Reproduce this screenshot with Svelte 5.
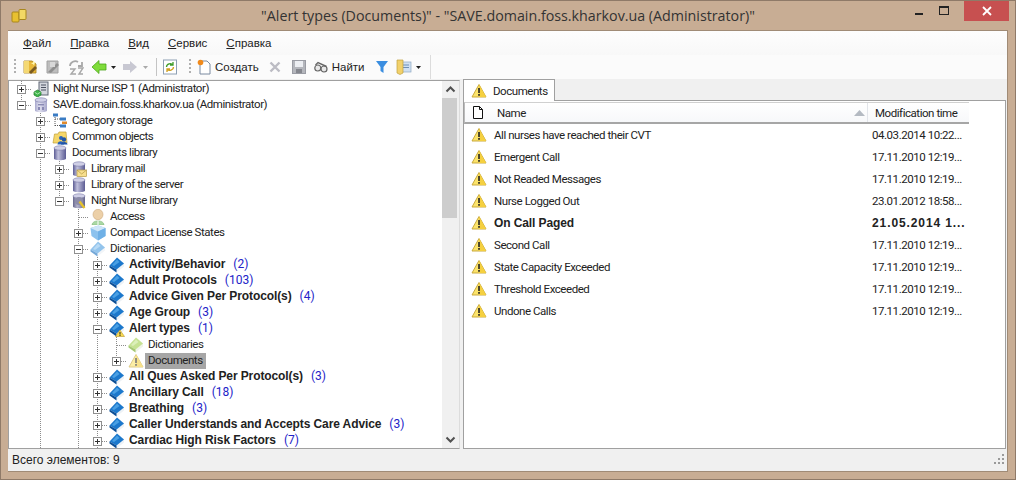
<script lang="ts">
  type Row = { level: number; exp?: string; icon: string; text: string; count?: string; bold?: boolean; last?: boolean; sel?: boolean };

  const menu = ['Файл', 'Правка', 'Вид', 'Сервис', 'Справка'];

  const rows: Row[] = [
    { level: 0, exp: '+', icon: 'server', text: 'Night Nurse ISP 1 (Administrator)' },
    { level: 0, exp: '-', icon: 'saveSrv', text: 'SAVE.domain.foss.kharkov.ua (Administrator)', last: true },
    { level: 1, exp: '+', icon: 'tree', text: 'Category storage' },
    { level: 1, exp: '+', icon: 'folder', text: 'Common objects' },
    { level: 1, exp: '-', icon: 'db', text: 'Documents library' },
    { level: 2, exp: '+', icon: 'dbMail', text: 'Library mail' },
    { level: 2, exp: '+', icon: 'db', text: 'Library of the server' },
    { level: 2, exp: '-', icon: 'dbKey', text: 'Night Nurse library', last: true },
    { level: 3, icon: 'user', text: 'Access' },
    { level: 3, exp: '+', icon: 'cube', text: 'Compact License States' },
    { level: 3, exp: '-', icon: 'bookPale', text: 'Dictionaries' },
    { level: 4, exp: '+', icon: 'book', text: 'Activity/Behavior', count: '(2)', bold: true },
    { level: 4, exp: '+', icon: 'book', text: 'Adult Protocols', count: '(103)', bold: true },
    { level: 4, exp: '+', icon: 'book', text: 'Advice Given Per Protocol(s)', count: '(4)', bold: true },
    { level: 4, exp: '+', icon: 'book', text: 'Age Group', count: '(3)', bold: true },
    { level: 4, exp: '-', icon: 'bookWarn', text: 'Alert types', count: '(1)', bold: true },
    { level: 5, icon: 'bookGreen', text: 'Dictionaries' },
    { level: 5, exp: '+', icon: 'warnPale', text: 'Documents', sel: true, last: true },
    { level: 4, exp: '+', icon: 'book', text: 'All Ques Asked Per Protocol(s)', count: '(3)', bold: true },
    { level: 4, exp: '+', icon: 'book', text: 'Ancillary Call', count: '(18)', bold: true },
    { level: 4, exp: '+', icon: 'book', text: 'Breathing', count: '(3)', bold: true },
    { level: 4, exp: '+', icon: 'book', text: 'Caller Understands and Accepts Care Advice', count: '(3)', bold: true },
    { level: 4, exp: '+', icon: 'book', text: 'Cardiac High Risk Factors', count: '(7)', bold: true }
  ];

  // vertical guide lines that run through the deeper rows
  const openLevels = [1, 3, 4];

  const docs = [
    { name: 'All nurses have reached their CVT', date: '04.03.2014 10:22...' },
    { name: 'Emergent Call', date: '17.11.2010 12:19...' },
    { name: 'Not Readed Messages', date: '17.11.2010 12:19...' },
    { name: 'Nurse Logged Out', date: '23.01.2012 18:58...' },
    { name: 'On Call Paged', date: '21.05.2014 1...', bold: true },
    { name: 'Second Call', date: '17.11.2010 12:19...' },
    { name: 'State Capacity Exceeded', date: '17.11.2010 12:19...' },
    { name: 'Threshold Exceeded', date: '17.11.2010 12:19...' },
    { name: 'Undone Calls', date: '17.11.2010 12:19...' }
  ];

  function range(n: number) {
    return Array.from({ length: n }, (_, i) => i);
  }
</script>

{#snippet warn(pale = false)}
  <svg class="ico" class:pale width="16" height="16" viewBox="0 0 16 16">
    <path d="M8 1.5 15 14H1Z" fill="#fbe36a" stroke="#c9a93c" stroke-linejoin="round" />
    <path d="M8 1.5 15 14H8Z" fill="#f5d040" />
    <rect x="7.2" y="5" width="1.6" height="5" fill="#222" />
    <rect x="7.2" y="11" width="1.6" height="1.8" fill="#222" />
  </svg>
{/snippet}

{#snippet book(cover = '#1c78cc', light = '#4aa0e4', dark = '#0d4f96', pages = '#eef2f6')}
  <path d="M.5 9 7.5 15.5 15 9.5 15 6 7.5 12 .5 8Z" fill={pages} />
  <path d="M.5 8.5 8 .5 15 6.5 7.5 12.5Z" fill={cover} />
  <path d="M3 8 8 2.5 10.5 5 5 9Z" fill={light} />
  <path d="M.5 8.5 7.5 12.5 7.5 15.5 .5 10.5Z" fill={dark} />
{/snippet}

{#snippet cyl(id: string, a = '#5c5c94', b = '#c0c0dc')}
  <defs>
    <linearGradient {id} x1="0" x2="1" y1="0" y2="0">
      <stop offset="0" stop-color={a} />
      <stop offset=".35" stop-color={b} />
      <stop offset="1" stop-color={a} />
    </linearGradient>
  </defs>
  <path d="M2 3V13.5C2 15.8 14 15.8 14 13.5V3Z" fill="url(#{id})" />
  <ellipse cx="8" cy="3" rx="6" ry="2.2" fill="#cfcfe6" stroke="#7a7aa8" stroke-width=".6" />
{/snippet}

{#snippet treeIcon(name: string)}
  {#if name === 'warnPale'}
    {@render warn(true)}
  {:else}
    <svg class="ico" width="16" height="16" viewBox="0 0 16 16">
      {#if name === 'book'}
        {@render book()}
      {:else if name === 'bookPale'}
        {@render book('#93c4ec', '#b8daf5', '#74a8d8', '#f2f5f8')}
      {:else if name === 'bookGreen'}
        {@render book('#c6e293', '#dcefba', '#a4c872', '#f0f4e8')}
      {:else if name === 'bookWarn'}
        {@render book()}
        <path d="M11 9 15.5 15.5H6.5Z" fill="#fbdc4f" stroke="#b8962c" stroke-width=".6" />
        <rect x="10.5" y="11" width="1" height="2.6" fill="#222" />
        <rect x="10.5" y="14" width="1" height="1" fill="#222" />
      {:else if name === 'db'}
        {@render cyl('cylA')}
      {:else if name === 'dbMail'}
        {@render cyl('cylB')}
        <rect x="6" y="9" width="9.5" height="6.5" fill="#f7df8f" stroke="#b59a48" stroke-width=".7" />
        <path d="M6 9 10.7 13 15.5 9" fill="none" stroke="#b59a48" stroke-width=".7" />
      {:else if name === 'dbKey'}
        {@render cyl('cylC', '#66668c', '#b4b4cc')}
        <circle cx="8" cy="8" r="4" fill="#8c8ca8" />
        <path d="M8.5 8.5 13.5 15" stroke="#e5c22c" stroke-width="2.4" />
      {:else if name === 'server'}
        <rect x="6" y="1" width="9" height="13" fill="#d4d7de" stroke="#5f6675" />
        <path d="M8 4h5M8 6.5h5M8 9h5" stroke="#4b5160" />
        <path d="M1 11 4.5 9 8 11V14L4.5 16 1 14Z" fill="#3fb54a" stroke="#1f7a2c" stroke-width=".7" />
        <path d="M1.5 11.2 4.5 13 7.5 11.2" fill="none" stroke="#c8f0c8" stroke-width=".8" />
      {:else if name === 'saveSrv'}
        {@render cyl('cylD', '#a7a7cc', '#e2e2f0')}
        <rect x="5" y="7" width="6" height="1.4" fill="#8a8ab4" />
        <rect x="5" y="10" width="2" height="3" fill="#8a8ab4" />
        <rect x="9" y="10" width="2" height="3" fill="#8a8ab4" />
      {:else if name === 'tree'}
        <path d="M3 2v11M3 6h6M3 12.5h6" fill="none" stroke="#555" stroke-dasharray="1 1" />
        <rect x="1" y="0.5" width="5" height="3" fill="#3a7cc4" />
        <rect x="8" y="4.5" width="6" height="3" fill="#3a7cc4" />
        <rect x="10" y="8.5" width="5" height="2.5" fill="#e08a2c" />
        <rect x="8" y="11.5" width="6" height="3" fill="#3a7cc4" />
      {:else if name === 'folder'}
        <path d="M1 14 2.5 5H6L7 3H14L15 14Z" fill="#f5d76a" stroke="#c2a03a" stroke-width=".7" />
        <circle cx="9" cy="9" r="2" fill="#2a62b8" />
        <circle cx="12" cy="10.5" r="2.2" fill="#1f54a8" />
        <path d="M5.5 15.5C5.5 11 12 11 12 15.5Z" fill="#2a62b8" />
        <path d="M9 15.5C9 12 15.5 12 15.5 15.5Z" fill="#1f54a8" />
      {:else if name === 'user'}
        <ellipse cx="8" cy="5.5" rx="5" ry="5.2" fill="#ecd0a8" stroke="#cdaa7c" stroke-width=".6" />
        <path d="M2 16C2 10.5 14 10.5 14 16Z" fill="#a9d8a4" stroke="#83b97e" stroke-width=".6" />
        <path d="M8 11.5V16" stroke="#fff" />
      {:else if name === 'cube'}
        <path d="M.5 3 8.5 .5 15.5 3V11L8 15.5 1.5 11Z" fill="#8cc2ee" />
        <path d="M.5 3 8 6.5 15.5 3 8.5 .5Z" fill="#cfe6f9" />
        <path d="M8 6.5V15.5L15.5 11V3Z" fill="#6fb0e6" />
      {/if}
    </svg>
  {/if}
{/snippet}

{#snippet caret()}
  <svg class="caret" width="5" height="3" viewBox="0 0 5 3"><path d="M0 0H5L2.5 3Z" fill="currentColor" /></svg>
{/snippet}

<div class="window">
  <header class="titlebar">
    <div class="appicon">
      <svg width="16" height="16" viewBox="0 0 16 16">
        <rect x="1" y="4" width="7" height="10" rx="1" fill="#e8c030" stroke="#a8861c" />
        <rect x="8" y="1.5" width="7" height="10" rx="1" fill="#f3d865" stroke="#a8861c" />
      </svg>
    </div>
    <div class="title">"Alert types (Documents)" - "SAVE.domain.foss.kharkov.ua (Administrator)"</div>
    <div class="controls">
      <svg class="ctl" width="26" height="20" viewBox="0 0 26 20"><rect x="8" y="12" width="8" height="2" fill="#222" /></svg>
      <svg class="ctl" width="26" height="20" viewBox="0 0 26 20"><rect x="6.5" y="5.5" width="9" height="8" fill="none" stroke="#222" /><rect x="6" y="5" width="10" height="2" fill="#222" /></svg>
      <div class="close">
        <svg width="10" height="10" viewBox="0 0 10 10"><path d="M1 1 9 9M9 1 1 9" stroke="#fff" stroke-width="1.8" /></svg>
      </div>
    </div>
  </header>

  <div class="client">
    <nav class="menubar">
      {#each menu as m}
        <span class="menuitem"><u>{m[0]}</u>{m.slice(1)}</span>
      {/each}
    </nav>

    <div class="toolbars">
      <div class="toolbar">
        <span class="grip"></span>
        <svg class="tb" width="16" height="16" viewBox="0 0 16 16">
          <path d="M2 2H10L14 5V14H2Z" fill="#e9b93a" stroke="#a47c1a" stroke-width=".8" />
          <path d="M2 2H7V14H2Z" fill="#f4d873" />
          <path d="M7 13 13 7 15 9 9 15Z" fill="#7a5a20" />
          <path d="M11 1 12 3 14 3.5 12.5 4.5 12 6.5 11 5 9 4.5 11 3.5Z" fill="#fff6b0" />
        </svg>
        <svg class="tb" width="16" height="16" viewBox="0 0 16 16">
          <path d="M2 2H13V14H2Z" fill="#bdbdbd" stroke="#a2a2a2" />
          <path d="M3 13 12 4 14 6 6 14Z" fill="#8f8f8f" />
          <path d="M5 3H10V8H5Z" fill="#d8d8d8" />
        </svg>
        <svg class="tb" width="16" height="16" viewBox="0 0 16 16">
          <path d="M2 7C2 3 7 1 10 3M14 3V7H10" fill="none" stroke="#a8a8a8" stroke-width="1.8" />
          <path d="M2 10H7L3 15H8" fill="none" stroke="#a8a8a8" stroke-width="1.4" />
          <path d="M10 9H15L11 15H15" fill="none" stroke="#a8a8a8" stroke-width="1.4" />
        </svg>
        <svg class="tb arrow" width="16" height="16" viewBox="0 0 16 16">
          <path d="M1 8 8 1.5V5H15V11H8V14.5Z" fill="#7fdc3a" stroke="#4da61c" stroke-width=".8" />
        </svg>
        {@render caret()}
        <svg class="tb fwd" width="14" height="16" viewBox="0 0 14 16">
          <path d="M14 8 7 2V5H0V11H7V14Z" fill="#c8c8d2" />
        </svg>
        <span class="dim">{@render caret()}</span>
        <span class="sep"></span>
        <svg class="tb refresh" width="14" height="16" viewBox="0 0 14 16">
          <rect x=".5" y="1" width="13" height="14" fill="#fff" stroke="#8ea0b4" />
          <path d="M3.5 8C3.5 5 8 3.5 10 6M10 3V6H7" fill="none" stroke="#3f9c2a" stroke-width="1.3" />
          <path d="M10.5 8C10.5 11 6 12.5 4 10M4 13V10H7" fill="none" stroke="#d0a020" stroke-width="1.3" />
        </svg>
      </div>
      <div class="toolbar second">
        <span class="grip"></span>
        <svg class="tb" width="14" height="16" viewBox="0 0 14 16">
          <path d="M3 2H10L13 5V15H3Z" fill="#fff" stroke="#7a8aa0" />
          <circle cx="3.5" cy="3.5" r="2.8" fill="#f08a1c" />
        </svg>
        <span class="label">Создать</span>
        <svg class="tb del" width="12" height="12" viewBox="0 0 12 12"><path d="M1.5 1.5 10.5 10.5M10.5 1.5 1.5 10.5" stroke="#bcbcc4" stroke-width="2.4" /></svg>
        <svg class="tb sv" width="14" height="14" viewBox="0 0 14 14">
          <rect x=".5" y=".5" width="13" height="13" fill="#b4b6bc" stroke="#9a9ca4" />
          <rect x="3" y="1" width="8" height="6" fill="#eceef2" />
          <rect x="4" y="9" width="6" height="4" fill="#85878e" />
        </svg>
        <svg class="tb bin" width="14" height="14" viewBox="0 0 14 14">
          <circle cx="3.8" cy="8" r="3" fill="#e8e8e8" stroke="#666" stroke-width="1.2" />
          <circle cx="10" cy="9" r="3" fill="#e8e8e8" stroke="#666" stroke-width="1.2" />
          <path d="M1.5 5 4 2.5 12.5 6.5" fill="none" stroke="#666" stroke-width="1.4" />
        </svg>
        <span class="label find">Найти</span>
        <svg class="tb filter" width="12" height="12" viewBox="0 0 12 12"><path d="M0 0H12L7.5 6V12L4.5 10V6Z" fill="#3b8ee0" /></svg>
        <svg class="tb view" width="16" height="16" viewBox="0 0 16 16">
          <rect x="4" y="3" width="11" height="10" fill="#cfe0f2" stroke="#8fa8c4" stroke-width=".7" />
          <path d="M6 6H13M6 8.5H13" stroke="#6f8fb4" />
          <path d="M1 1H7V14L4 15.5 1 14Z" fill="#f2d16b" stroke="#c0a040" stroke-width=".7" />
        </svg>
        {@render caret()}
      </div>
    </div>

    <div class="panes">
      <section class="treepane">
        <div class="tree">
          {#each rows as r}
            <div class="row">
              {#each range(r.level) as i}
                <span class="cell" class:v={openLevels.includes(i)}></span>
              {/each}
              <span class="cell branch" class:last={r.last}>
                {#if r.exp}
                  <span class="exp">
                    <svg width="9" height="9" viewBox="0 0 9 9">
                      <path d={r.exp === '+' ? 'M2 4.5H7M4.5 2V7' : 'M2 4.5H7'} stroke="#333" />
                    </svg>
                  </span>
                {/if}
              </span>
              <span class="nodeicon">{@render treeIcon(r.icon)}</span>
              <span class="node" class:bold={r.bold} class:sel={r.sel}>{r.text}</span>
              {#if r.count}<span class="count">{r.count}</span>{/if}
            </div>
          {/each}
        </div>
        <div class="scrollbar">
          <svg class="sbtn" width="17" height="17" viewBox="0 0 17 17"><path d="M4.5 10.5 8.5 6.5 12.5 10.5" fill="none" stroke="#505050" stroke-width="2" /></svg>
          <div class="track"><div class="thumb"></div></div>
          <svg class="sbtn" width="17" height="17" viewBox="0 0 17 17"><path d="M4.5 6.5 8.5 10.5 12.5 6.5" fill="none" stroke="#505050" stroke-width="2" /></svg>
        </div>
      </section>

      <section class="rightpane">
        <div class="tabs">
          <div class="tab">{@render warn()}<span>Documents</span></div>
        </div>
        <div class="listbox">
          <div class="listhead">
            <div class="col-name">
              <svg width="10" height="13" viewBox="0 0 10 13"><path d="M.5.5H6.5L9.5 3.5V12.5H.5ZM6.5.5V3.5H9.5" fill="#fff" stroke="#111" /></svg>
              <span>Name</span>
              <svg class="sort" width="11" height="6" viewBox="0 0 11 6"><path d="M5.5 0 11 6H0Z" fill="#b4bac2" /></svg>
            </div>
            <div class="col-time">Modification time</div>
          </div>
          {#each docs as d}
            <div class="docrow" class:bold={d.bold}>
              {@render warn()}
              <span class="docname">{d.name}</span>
              <span class="docdate">{d.date}</span>
            </div>
          {/each}
        </div>
      </section>
    </div>

    <footer class="statusbar">
      <span>Всего элементов: 9</span>
      <svg width="12" height="12" viewBox="0 0 12 12" fill="#9a9a9a">
        <rect x="8" y="0" width="2" height="2" /><rect x="4" y="4" width="2" height="2" /><rect x="8" y="4" width="2" height="2" />
        <rect x="0" y="8" width="2" height="2" /><rect x="4" y="8" width="2" height="2" /><rect x="8" y="8" width="2" height="2" />
      </svg>
    </footer>
  </div>
</div>

<style>
  :global(body) {
    margin: 0;
    background: #c8ad94;
  }

  .window {
    width: 1016px;
    height: 480px;
    box-sizing: border-box;
    border: 1px solid #8f7a68;
    padding: 0 7px 7px;
    background: #c8ad94;
    display: flex;
    flex-direction: column;
    font-family: Roboto, "Liberation Sans", sans-serif;
    font-size: 11.5px;
    letter-spacing: -0.45px;
    color: #222;
  }

  .titlebar {
    height: 29px;
    flex: none;
    display: grid;
    grid-template-columns: 1fr auto 1fr;
    align-items: start;
  }

  .appicon {
    padding: 7px 0 0 3px;
  }

  .title {
    font-family: "Open Sans", sans-serif;
    font-size: 14.25px;
    letter-spacing: 0;
    line-height: 29px;
    color: #333;
    white-space: nowrap;
  }

  .controls {
    display: flex;
    justify-content: flex-end;
    align-items: flex-start;
  }

  .ctl {
    display: block;
  }

  .close {
    width: 45px;
    height: 20px;
    background: #c75050;
    display: flex;
    align-items: center;
    justify-content: center;
    margin-left: 5px;
    margin-right: -1px;
  }

  .client {
    flex: 1;
    min-height: 0;
    display: flex;
    flex-direction: column;
    background: #f0f0f0;
    border: 1px solid #a08b76;
    border-width: 1px 1px 1px 0;
  }

  .menubar {
    height: 24px;
    flex: none;
    display: flex;
    align-items: center;
    gap: 19px;
    padding-left: 15px;
    background: linear-gradient(#fdfdfd, #f8f8f8);
    font-family: "Liberation Sans", sans-serif;
    font-size: 11.5px;
    letter-spacing: 0;
  }

  .toolbars {
    height: 25px;
    flex: none;
    display: flex;
    align-items: center;
    background: #fbfbfb;
    border-bottom: 1px solid #f0f0f0;
    box-sizing: border-box;
    padding-left: 4px;
  }

  .toolbar {
    display: flex;
    align-items: center;
    height: 24px;
  }

  .second {
    margin-left: 3px;
    padding-right: 5px;
    border-right: 1px solid #dcdcdc;
  }

  .grip {
    width: 2px;
    height: 16px;
    margin: 0 6px 0 2px;
    background: linear-gradient(#b0b0b0 50%, transparent 50%) 0 0 / 2px 4px;
  }

  .tb {
    display: block;
    flex: none;
    margin-right: 7px;
  }

  .arrow {
    margin-right: 4px;
  }

  .caret {
    display: block;
    flex: none;
    color: #222;
    margin-right: 4px;
  }

  .dim {
    display: flex;
  }

  .dim .caret {
    color: #aaa;
  }

  .sep {
    width: 1px;
    height: 18px;
    background: #c4c4c4;
    margin: 0 6px 0 4px;
  }

  .fwd {
    margin-left: 3px;
    margin-right: 6px;
  }

  .label {
    font-family: "Liberation Sans", sans-serif;
    font-size: 11.5px;
    letter-spacing: 0;
    margin-right: 10px;
    margin-left: -3px;
  }

  .del {
    margin-right: 11px;
  }

  .sv {
    margin-right: 8px;
  }

  .bin {
    margin-right: 7px;
  }

  .find {
    margin-left: -3px;
    margin-right: 11px;
  }

  .filter {
    margin-right: 8px;
  }

  .view {
    margin-right: 4px;
  }

  .panes {
    flex: 1;
    min-height: 0;
    display: flex;
  }

  .treepane {
    width: 452px;
    flex: none;
    display: flex;
    background: #fff;
    border: 1px solid #a0a0a0;
    border-width: 1px 0 1px 1px;
    box-sizing: border-box;
    border-right: 1px solid #dcdcdc;
  }

  .tree {
    flex: 1;
    min-width: 0;
    overflow: hidden;
    padding: 0 0 0 3px;
  }

  .row {
    height: 16px;
    display: flex;
    align-items: flex-start;
    white-space: nowrap;
  }

  .cell {
    position: relative;
    width: 19px;
    height: 16px;
    flex: none;
  }

  .cell.v::before,
  .branch::before {
    content: '';
    position: absolute;
    left: 9px;
    top: 0;
    width: 1px;
    height: 100%;
    background: linear-gradient(#8c8c8c 50%, transparent 50%) 0 0 / 1px 2px;
  }

  .branch.last::before {
    height: 50%;
  }

  .branch::after {
    content: '';
    position: absolute;
    left: 10px;
    top: 8px;
    width: 9px;
    height: 1px;
    background: linear-gradient(90deg, #8c8c8c 50%, transparent 50%) 0 0 / 2px 1px;
  }

  .exp {
    position: absolute;
    z-index: 1;
    left: 5px;
    top: 4px;
    width: 9px;
    height: 9px;
    box-sizing: border-box;
    border: 1px solid #8f8f8f;
    background: #fff;
    display: flex;
    align-items: center;
    justify-content: center;
  }

  .exp svg {
    flex: none;
    display: block;
  }

  .nodeicon {
    flex: none;
    margin-left: 2px;
    position: relative;
    z-index: 1;
  }

  .ico {
    display: block;
    flex: none;
  }

  .pale {
    opacity: 0.6;
  }

  .node {
    line-height: 14px;
    height: 16px;
    padding: 0 3px;
    margin-left: 1px;
  }

  .bold {
    font-family: "Liberation Sans", sans-serif;
    font-size: 12px;
    font-weight: 700;
    letter-spacing: -0.1px;
  }

  .sel {
    background: #a6a6a6;
    box-sizing: border-box;
  }

  .count {
    color: #2222c8;
    font-size: 12px;
    letter-spacing: 0;
    line-height: 14px;
    margin-left: 5px;
  }

  .scrollbar {
    width: 17px;
    flex: none;
    display: flex;
    flex-direction: column;
    background: #f0f0f0;
  }

  .sbtn {
    display: block;
    flex: none;
  }

  .track {
    flex: 1;
    min-height: 0;
  }

  .thumb {
    width: 15px;
    height: 120px;
    background: #cdcdcd;
  }

  .rightpane {
    width: 543px;
    margin-left: 3px;
    margin-top: -1px;
    display: flex;
    flex-direction: column;
    min-height: 0;
  }

  .tabs {
    height: 21px;
    flex: none;
    display: flex;
  }

  .tab {
    width: 92px;
    height: 22px;
    box-sizing: border-box;
    display: flex;
    align-items: center;
    gap: 6px;
    padding-left: 7px;
    background: #fff;
    border: 1px solid #a0a0a0;
    border-bottom: 0;
    position: relative;
    z-index: 1;
  }

  .listbox {
    flex: 1;
    min-height: 0;
    background: #fff;
    border: 1px solid #a0a0a0;
    padding-top: 1px;
  }

  .listhead {
    width: 504px;
    height: 19px;
    display: flex;
    background: linear-gradient(#fff, #f7f8fa);
    border-bottom: 2px solid #a6a6a6;
    border-top: 1px solid #d0d0d0;
    border-left: 1px solid #bbb;
    box-sizing: content-box;
  }

  .col-name {
    width: 403px;
    display: flex;
    align-items: center;
    gap: 14px;
    padding-left: 8px;
    box-sizing: border-box;
    border-right: 1px solid #e2e5ea;
  }

  .col-name span {
    flex: 1;
  }

  .sort {
    margin-right: 2px;
  }

  .col-time {
    display: flex;
    align-items: center;
    padding-left: 7px;
  }

  .docrow {
    width: 505px;
    height: 22px;
    display: flex;
    align-items: center;
    padding-left: 7px;
    box-sizing: border-box;
    white-space: nowrap;
  }

  .docname {
    width: 378px;
    margin-left: 7px;
    flex: none;
  }

  .docrow.bold .docdate {
    letter-spacing: 0.9px;
  }

  .statusbar {
    height: 22px;
    flex: none;
    display: flex;
    align-items: center;
    justify-content: space-between;
    padding: 0 1px 0 4px;
    font-family: "Liberation Sans", sans-serif;
    font-size: 12px;
    letter-spacing: 0;
  }
</style>
